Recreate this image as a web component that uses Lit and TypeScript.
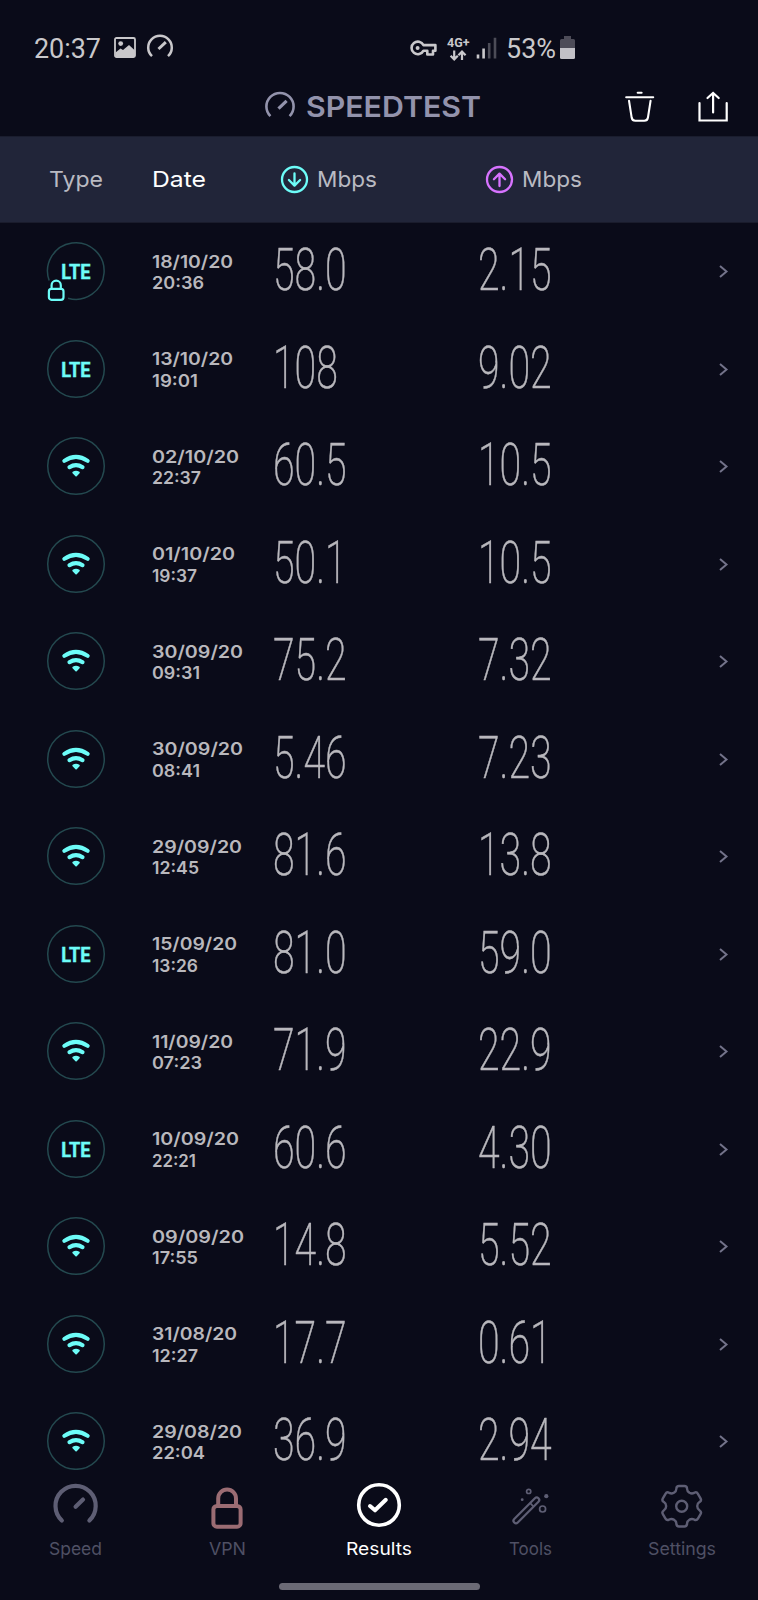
import { LitElement, html, svg, css } from "lit";
import { customElement, property } from "lit/decorators.js";

type Kind = "lte" | "wifi" | "lte-vpn";

interface Result {
  kind: Kind;
  date: string;
  dateWidth: number;
  time: string;
  timeWidth: number;
  down: string;
  up: string;
}

const r = (
  kind: Kind, date: string, dateWidth: number, time: string, timeWidth: number, down: string, up: string,
): Result => ({ kind, date, dateWidth, time, timeWidth, down, up });

const RESULTS: Result[] = [
  r("lte-vpn", "18/10/20", 81, "20:36", 52, "58.0", "2.15"),
  r("lte", "13/10/20", 81, "19:01", 46, "108", "9.02"),
  r("wifi", "02/10/20", 87, "22:37", 49, "60.5", "10.5"),
  r("wifi", "01/10/20", 83, "19:37", 45, "50.1", "10.5"),
  r("wifi", "30/09/20", 91, "09:31", 48, "75.2", "7.32"),
  r("wifi", "30/09/20", 91, "08:41", 48, "5.46", "7.23"),
  r("wifi", "29/09/20", 90, "12:45", 47, "81.6", "13.8"),
  r("lte", "15/09/20", 85, "13:26", 46, "81.0", "59.0"),
  r("wifi", "11/09/20", 81, "07:23", 50, "71.9", "22.9"),
  r("lte", "10/09/20", 87, "22:21", 44, "60.6", "4.30"),
  r("wifi", "09/09/20", 92, "17:55", 46, "14.8", "5.52"),
  r("wifi", "31/08/20", 85, "12:27", 46, "17.7", "0.61"),
  r("wifi", "29/08/20", 90, "22:04", 53, "36.9", "2.94"),
];

/** A line of text set to an exact width; the baseline sits at the bottom of the box. */
const fit = (text: string, width: number, height: number) => html`
  <svg class="fit" width=${width} height=${height}>
    <text x="0" y=${height} textLength=${width} lengthAdjust="spacingAndGlyphs">${text}</text>
  </svg>`;

/** Closed outline of a six-toothed gear with softened corners. */
function gearPath(cx: number, cy: number): string {
  const pts: [number, number][] = [];
  for (let i = 0; i < 6; i++) {
    for (const [radius, offset] of [[15.8, -20], [20.9, -14.5], [20.9, 14.5], [15.8, 20]]) {
      const a = ((i * 60 + offset - 90) * Math.PI) / 180;
      pts.push([cx + radius * Math.cos(a), cy + radius * Math.sin(a)]);
    }
  }
  const toward = (a: [number, number], b: [number, number], d: number) => {
    const len = Math.hypot(b[0] - a[0], b[1] - a[1]);
    const t = Math.min(0.5, d / len);
    return `${(a[0] + (b[0] - a[0]) * t).toFixed(2)} ${(a[1] + (b[1] - a[1]) * t).toFixed(2)}`;
  };
  return pts
    .map((p, i) => {
      const prev = pts[(i + pts.length - 1) % pts.length];
      const next = pts[(i + 1) % pts.length];
      return `${i ? "L" : "M"}${toward(p, prev, 2.6)} Q${p[0].toFixed(2)} ${p[1].toFixed(2)} ${toward(p, next, 2.6)}`;
    })
    .join(" ") + "Z";
}

const iconBase = css`
  svg { display: block; flex: none; fill: none; overflow: visible; }
  .fit { fill: currentColor; }
`;

@customElement("status-bar")
export class StatusBar extends LitElement {
  static styles = [iconBase, css`
    :host { display: flex; align-items: flex-start; height: 80px; color: #c9c8cb; font-family: Roboto, sans-serif; }
    .time { padding: 38.2px 0 0 34.2px; font-size: 27.4px; }
    .level { padding: 38.2px 0 0 8.8px; font-size: 27.4px; }
    .picture { margin: 37px 0 0 12.8px; }
    .gauge { margin: 34px 0 0 11px; }
    .key { margin: 40px 0 0 237px; }
    .network { display: flex; flex-direction: column; gap: 3px; margin: 38px 0 0 10px; font-size: 12px; font-weight: 700; }
    .bars { margin: 37px 0 0 6px; }
    .battery { margin: 36px 0 0 4.200px; }
  `];

  render() {
    return html`
      <div class="time">${fit("20:37", 67, 19.6)}</div>
      <svg class="picture" width="22" height="21">
        <rect x="1" y="1" width="20" height="19" rx="1.5" stroke="currentColor" stroke-width="1.8"></rect>
        <circle cx="6.7" cy="6.6" r="2.4" fill="currentColor"></circle>
        <path d="M1.5 20V15.5L6.5 11.5L9 13L15 8L21 13.5V20Z" fill="currentColor"></path>
      </svg>
      <svg class="gauge" width="26" height="24" stroke="currentColor" stroke-width="2.5">
        <path d="M5 22.2A11.8 11.8 0 1 1 21 22.2"></path>
        <path d="M11.5 15L18.8 8.2" stroke-width="3"></path>
      </svg>
      <svg class="key" width="27" height="16" stroke="currentColor" stroke-width="2.6">
        <path d="M13.5 5.1H25.4V10.7H23V14.5H17.3V10.7H13.5A6.3 6.3 0 1 1 13.5 5.1Z" stroke-linejoin="round"></path>
        <circle cx="7.6" cy="7.9" r="2" fill="currentColor" stroke="none"></circle>
      </svg>
      <div class="network">
        ${fit("4G+", 22.5, 9)}
        <svg width="23" height="11" stroke="currentColor" stroke-width="2.2">
          <path d="M7.2 .500V9M3.600 5.800L7.200 9.400L10.800 5.800M15 10V1.600M11.400 5.200L15 1.600L18.600 5.200"></path>
        </svg>
      </div>
      <svg class="bars" width="21" height="22">
        <path d="M2 17.5V21.5M7.6 11.5V21.5" stroke="currentColor" stroke-width="2.6"></path>
        <path d="M13.2 6V21.5M19 .8V21.5" stroke="#4c4c57" stroke-width="2.6"></path>
      </svg>
      <div class="level">${fit("53%", 50, 19.6)}</div>
      <svg class="battery" width="15" height="23">
        <path d="M4 0H11V3H13.5Q15 3 15 4.500V12H0V4.500Q0 3 1.500 3H4Z" fill="#4d4c58"></path>
        <path d="M0 12H15V21.500Q15 23 13.500 23H1.500Q0 23 0 21.500Z" fill="#c2c1c7"></path>
      </svg>`;
  }
}

@customElement("title-bar")
export class TitleBar extends LitElement {
  static styles = [iconBase, css`
    :host { display: flex; align-items: flex-start; height: 56px; color: #fff; }
    .brand { display: flex; align-items: flex-start; margin-left: 265px; color: #9393ac; }
    .gauge { margin-top: 12px; }
    .name { margin: 16.200px 0 0 10px; font: 600 29px Inter, sans-serif; }
    .trash { margin: 11px 0 0 143.500px; }
    .share { margin: 11px 0 0 44px; }
  `];

  render() {
    return html`
      <div class="brand">
        <svg class="gauge" width="31" height="26" stroke="currentColor" stroke-width="2.6">
          <path d="M5.400 24.200A13.600 13.600 0 1 1 24.600 24.200"></path>
          <path d="M13.500 16.700L21.600 8.800" stroke-width="3.200"></path>
        </svg>
        <div class="name">${fit("SPEEDTEST", 175, 20.8)}</div>
      </div>
      <svg class="trash" width="29" height="31" stroke="currentColor" stroke-width="2.100" stroke-linecap="round">
        <path d="M1.200 6.200H28.200M12.700 1.700H16.600"></path>
        <path d="M4 9.700L6.700 26.800Q7.300 29.800 10.300 29.800H19.300Q22.300 29.800 22.900 26.800L25.600 9.700"></path>
      </svg>
      <svg class="share" width="30" height="31" stroke="currentColor" stroke-width="2.200" stroke-linecap="round">
        <path d="M1.500 12V29.500H28.700V12M15.100 21.500V2.500M9.500 7L15.100 2L20.700 7"></path>
      </svg>`;
  }
}

@customElement("column-heads")
export class ColumnHeads extends LitElement {
  static styles = [iconBase, css`
    :host {
      display: grid; grid-template-columns: 153px 128px 205px 1fr; box-sizing: border-box; height: 87px;
      padding-top: 29px; background: #212539; border-top: 1px solid #1a1d2e; border-bottom: 1px solid #1a1c2c;
      color: #b9bac2; font: 400 22px Inter, sans-serif;
    }
    .type { padding: 5px 0 0 49.200px; }
    .date { padding-top: 5px; color: #fff; margin-left: -1.500px; }
    .speed { display: flex; gap: 9px; }
    .unit { padding-top: 5px; }
    .down { stroke: #6dfcf8; }
    .up { stroke: #d773ff; }
  `];

  private speed(dir: "down" | "up") {
    const arrow = dir === "down"
      ? "M13.500 7.500V19.500M7.900 14L13.500 19.600L19.100 14"
      : "M13.500 20V8M7.900 13.200L13.500 7.600L19.100 13.200";
    return html`
      <div class="speed">
        <svg class=${dir} width="27" height="27" stroke-width="2.300" stroke-linecap="round" stroke-linejoin="round">
          <circle cx="13.500" cy="13.500" r="12.500"></circle><path d=${arrow}></path>
        </svg>
        <div class="unit">${fit("Mbps", 60, 15.8)}</div>
      </div>`;
  }

  render() {
    return html`
      <div class="type">${fit("Type", 54, 15.8)}</div>
      <div class="date">${fit("Date", 54, 15.8)}</div>
      ${this.speed("down")}${this.speed("up")}`;
  }
}

@customElement("result-row")
export class ResultRow extends LitElement {
  @property({ attribute: false }) result!: Result;

  static styles = [iconBase, css`
    :host {
      display: grid; grid-template-columns: 46px 105px 122px 205px 241px 1fr; align-items: start;
      height: 97.500px; color: #b9b8bd;
    }
    .badge { grid-column: 2; margin-top: 18.300px; color: #6dfcf8; }
    .ring { stroke: #24494f; stroke-width: 1.500; }
    .lte { font: 700 20px Roboto, sans-serif; fill: currentColor; stroke: currentColor; stroke-width: .400; }
    .when {
      display: flex; flex-direction: column; gap: 9px; padding: 31.800px 0 0 .500px;
      font: 600 17.400px Inter, sans-serif;
    }
    .value {
      margin-top: 26.200px; width: max-content; font: 200 59.500px/43px Roboto, sans-serif;
      -webkit-text-stroke: .500px currentColor;
      transform: scaleX(.66); transform-origin: 0 0; white-space: nowrap;
    }
    .chevron { margin-top: 42.200px; stroke: #73738a; stroke-width: 2; }
  `];

  private badge(kind: Kind) {
    return html`
      <svg class="badge" width="60" height="60">
        ${kind === "lte-vpn"
          ? svg`<path class="ring" d="M3.200 39.600A28.300 28.300 0 1 1 22 57.200"></path>
              <g stroke="currentColor" stroke-width="2.200">
                <rect x="2.900" y="47.900" width="14.600" height="10.900" rx="2.500"></rect>
                <path d="M5.600 47.900V44.300a4.600 4.600 0 0 1 9.200 0V47.900"></path>
              </g>`
          : svg`<circle class="ring" cx="30" cy="30" r="28.300"></circle>`}
        ${kind === "wifi"
          ? svg`<path d="M18.300 24.800Q30 17 41.700 24.800M23.400 31.200Q30 27 36.600 31.200"
                stroke="currentColor" stroke-width="4" stroke-linecap="round"></path>
              <path d="M27.200 36.600Q30 34.800 32.900 36.600L30.100 39.500Z" fill="currentColor"
                stroke="currentColor" stroke-width="1.800" stroke-linejoin="round"></path>`
          : svg`<text class="lte" x="15.300" y="37.500" textLength="29.300" lengthAdjust="spacingAndGlyphs">LTE</text>`}
      </svg>`;
  }

  render() {
    const { kind, date, dateWidth, time, timeWidth, down, up } = this.result;
    return html`
      ${this.badge(kind)}
      <div class="when">
        ${fit(date, dateWidth, 12.7)}
        ${fit(time, timeWidth, 12.7)}
      </div>
      <div class="value">${down}</div>
      <div class="value">${up}</div>
      <svg class="chevron" width="9" height="13"><path d="M1 1L7.500 6.500L1 12"></path></svg>`;
  }
}

@customElement("nav-bar")
export class NavBar extends LitElement {
  static styles = [iconBase, css`
    :host { display: block; height: 130px; color: #5e5e74; }
    .tabs { display: grid; grid-template-columns: repeat(5, 1fr); height: 112.500px; }
    .tab {
      display: flex; flex-direction: column; align-items: center; gap: 12.500px; padding-top: 11px;
      font: 400 17.800px Inter, sans-serif;
    }
    .fit { color: #4f5064; }
    .active, .active .fit { color: #fff; }
    .vpn { color: #9b6c73; }
    .handle { width: 201px; height: 7.500px; margin: 0 auto; border-radius: 4px; background: #6b6a75; }
    .hollow { stroke: #0a0b19; }
  `];

  render() {
    return html`
      <nav class="tabs">
        <div class="tab">
          <svg width="48" height="48" stroke="currentColor" stroke-width="4.200" stroke-linecap="round">
            <path d="M9.800 39.500A20.100 20.100 0 1 1 37.400 39.500M23.600 25.800L31 18.600"></path>
          </svg>
          ${fit("Speed", 53, 13)}
        </div>
        <div class="tab vpn">
          <svg width="48" height="48" stroke="currentColor" stroke-width="4">
            <rect x="10.400" y="25" width="27.200" height="20.700" rx="3.500"></rect>
            <path d="M15.200 25V17.500a8.900 8.900 0 0 1 17.800 0V25"></path>
          </svg>
          ${fit("VPN", 37, 13)}
        </div>
        <div class="tab active">
          <svg width="48" height="48" stroke="currentColor" stroke-width="4" stroke-linecap="round" stroke-linejoin="round">
            <circle cx="24" cy="24" r="20.300" stroke-width="3.600"></circle>
            <path d="M15 25L20 29.300L30.800 18.800"></path>
          </svg>
          ${fit("Results", 66, 13)}
        </div>
        <div class="tab">
          <svg width="48" height="48" stroke="currentColor" stroke-width="1.700" stroke-linecap="round">
            <path d="M9 39.800L29.700 19" stroke-width="7.200"></path>
            <path class="hollow" d="M9 39.800L29.700 19" stroke-width="2.800"></path>
            <path d="M23.700 22.700L26.300 25.300"></path>
            <circle cx="21.700" cy="10.400" r="2.100"></circle>
            <circle cx="35.600" cy="28" r="3"></circle>
            <circle cx="15.200" cy="18.700" r="1.400" fill="currentColor" stroke="none"></circle>
            <circle cx="39.300" cy="15.200" r="2.100" fill="currentColor" stroke="none"></circle>
          </svg>
          ${fit("Tools", 43, 13)}
        </div>
        <div class="tab">
          <svg width="48" height="48" stroke="currentColor" stroke-width="2.400">
            <path d=${gearPath(23.7, 25.2)} stroke-linejoin="round"></path>
            <circle cx="23.700" cy="25.200" r="5.500"></circle>
          </svg>
          ${fit("Settings", 68, 13)}
        </div>
      </nav>
      <div class="handle"></div>`;
  }
}

@customElement("app-root")
export class AppRoot extends LitElement {
  static styles = css`
    :host { display: flex; flex-direction: column; width: 758px; height: 1600px; overflow: hidden; background: #0a0b19; }
    .list { flex: 1; min-height: 0; overflow: hidden; }
  `;

  render() {
    return html`
      <status-bar></status-bar>
      <title-bar></title-bar>
      <column-heads></column-heads>
      <main class="list">
        ${RESULTS.map((item) => html`<result-row .result=${item}></result-row>`)}
      </main>
      <nav-bar></nav-bar>`;
  }
}
